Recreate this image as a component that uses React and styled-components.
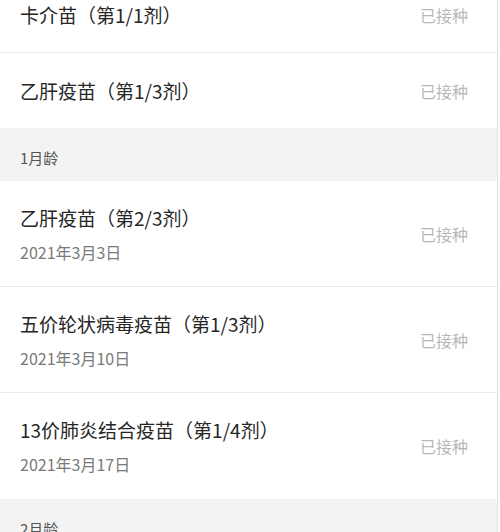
import React from 'react'
import styled, { createGlobalStyle } from 'styled-components'

const GlobalStyle = createGlobalStyle`
  html, body {
    margin: 0;
    padding: 0;
    background: #ffffff;
    overflow: hidden;
  }
  body {
    font-family: "Noto Sans CJK SC", "Noto Sans", sans-serif;
  }
`

const groups = [
  {
    age: null,
    items: [
      { name: '卡介苗（第1/1剂）', status: '已接种' },
      { name: '乙肝疫苗（第1/3剂）', status: '已接种' },
    ],
  },
  {
    age: '1月龄',
    items: [
      { name: '乙肝疫苗（第2/3剂）', date: '2021年3月3日', status: '已接种' },
      { name: '五价轮状病毒疫苗（第1/3剂）', date: '2021年3月10日', status: '已接种' },
      { name: '13价肺炎结合疫苗（第1/4剂）', date: '2021年3月17日', status: '已接种' },
    ],
  },
  {
    age: '2月龄',
    items: [],
  },
]

function App() {
  return (
    <>
      <GlobalStyle />
      <Page>
        {groups.map((group, gi) => (
          <Section key={gi}>
            {group.age && <AgeHeader>{group.age}</AgeHeader>}
            {group.items.map((item, i) => (
              <Row key={i} tall={!!item.date}>
                <Info>
                  <Title>{item.name}</Title>
                  {item.date && <DateText>{item.date}</DateText>}
                </Info>
                <Status>{item.status}</Status>
              </Row>
            ))}
          </Section>
        ))}
      </Page>
    </>
  )
}

export default App

const Page = styled.div`
  width: 497px;
  margin-top: -22px;
  border-right: 1px solid #e6e6e6;
  background: #ffffff;
`

const Section = styled.div`
  display: flex;
  flex-direction: column;
`

const AgeHeader = styled.div`
  height: 53px;
  box-sizing: border-box;
  padding: 20px 20px 0;
  background: #f3f3f3;
  color: #555555;
  font-size: 15px;
  line-height: 20px;
`

const Row = styled.div`
  display: flex;
  align-items: center;
  justify-content: space-between;
  height: ${(p) => (p.tall ? '106px' : '75px')};
  box-sizing: border-box;
  padding: 0 29px 0 20px;
  border-bottom: 1px solid #ebebeb;

  &:last-child {
    border-bottom: none;
  }
`

const Info = styled.div`
  display: flex;
  flex-direction: column;
  gap: 11px;
`

const Title = styled.div`
  color: #262626;
  font-size: 19px;
  line-height: 26px;
`

const DateText = styled.div`
  color: #7a7a7a;
  font-size: 16px;
  line-height: 21px;
`

const Status = styled.div`
  color: #b8b8b8;
  font-size: 16px;
  line-height: 22px;
`
